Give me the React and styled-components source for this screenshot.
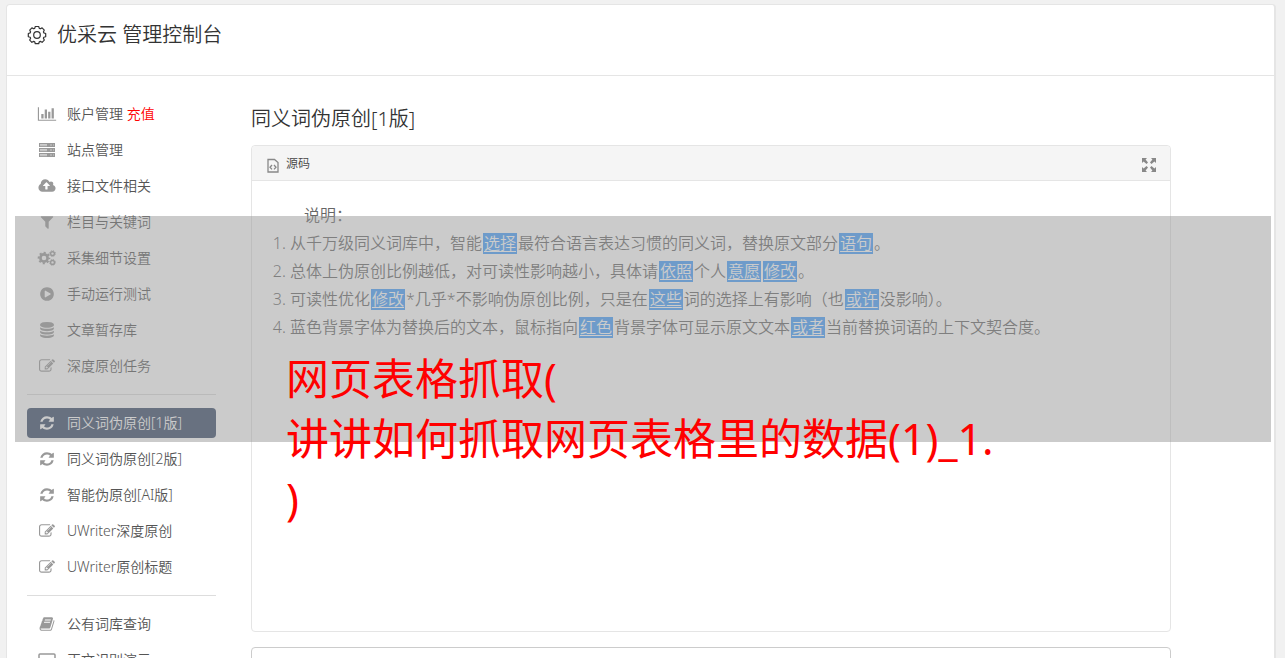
import React from "react";
import styled, { createGlobalStyle } from "styled-components"

const GlobalStyle = createGlobalStyle`
  * {
    box-sizing: border-box;
  }
  body {
    margin: 0;
    background: #f1f1f1;
    color: #444;
    font-family: "Noto Sans", "Noto Sans CJK SC", sans-serif;
    font-size: 14px;
    font-weight: 350;
  }
`

const Page = styled.div`
  position: relative;
  display: flex;
  height: 100vh;
  overflow: hidden;
  padding: 4px 9px 0 6px;
`

const Console = styled.div`
  flex: 1;
  background: white;
  border: 1px solid #e5e5e5;
  border-right-width: 2px;
  border-bottom: none;
  border-radius: 4px 4px 0 0;
`

const Header = styled.header`
  display: flex;
  align-items: center;
  gap: 10px;
  height: 71px;
  padding: 0 20px 10px;
  border-bottom: 1px solid #e5e5e5;
`

const Brand = styled.h1`
  margin: 0;
  color: #333;
  font-size: 20px;
  font-weight: 350;
  line-height: 30px;
`

const Columns = styled.div`
  display: flex;
  gap: 35px;
  padding: 23px 20px 0;
`

const Sidebar = styled.nav`
  flex: 0 0 189px;
`

const Menu = styled.ul`
  list-style: none;
  margin: 0;
  padding: 0;
  display: flex;
  flex-direction: column;
  gap: 6px;

  & + & {
    margin-top: 13px;
    padding-top: 13px;
    border-top: 1px solid #ddd;
  }
`

const MenuLink = styled.a`
  display: flex;
  align-items: center;
  gap: 10px;
  height: 30px;
  padding: 0 10px;
  border-radius: 4px;
  color: ${props => props.$active ? "white" : "#555"};
  background: ${props => props.$active ? "#394b69" : "transparent"};
  line-height: 28px;
  text-decoration: none;
  white-space: nowrap;

  svg {
    flex: none;
    width: 20px;
    color: ${props => props.$active ? "white" : "#999"};
  }
`

const Recharge = styled.span`
  color: red;
`

const Main = styled.main`
  flex: 1;
  max-width: 920px;
  display: flex;
  flex-direction: column;
`

const Title = styled.h2`
  margin: 5px 0 11px;
  color: #333;
  font-size: 20px;
  font-weight: 350;
  line-height: 30px;
`

const Editor = styled.section`
  min-height: 487px;
  margin-bottom: 15px;
  border: 1px solid #e5e5e5;
  border-radius: 4px;
`

const Toolbar = styled.div`
  display: flex;
  align-items: center;
  justify-content: space-between;
  height: 35px;
  padding: 0 14px;
  background: #f5f5f5;
  border-bottom: 1px solid #e5e5e5;
  border-radius: 4px 4px 0 0;
`

const ToolButton = styled.button`
  display: flex;
  align-items: center;
  gap: 6px;
  padding: 0;
  border: none;
  background: none;
  color: #444;
  font: inherit;
  font-size: 12px;

  svg {
    margin-top: 3px;
    color: #888;
  }
`

const Article = styled.div`
  padding: 20px;
  color: #666;
  font-size: 16px;
  line-height: 28px;

  p {
    margin: 0;
    text-indent: 2em;
  }

  ol {
    margin: 0;
    padding-left: 18px;
  }
`

const Word = styled.a`
  display: inline-block;
  margin: 0 1px;
  padding: 0 1px;
  color: white;
  background: #459ffd;
  line-height: 21px;
  text-underline-offset: 2px;
`

const Result = styled.textarea`
  height: 200px;
  resize: none;
  border: 1px solid #ccc;
  border-radius: 4px;
`

const Shade = styled.div`
  position: absolute;
  top: 216px;
  left: 15px;
  right: 14px;
  height: 226px;
  padding: 133px 0 0 271px;
  background: rgba(151, 151, 151, 0.5);
  pointer-events: none;
`

const Caption = styled.p`
  margin: 0;
  color: red;
  font-size: 43px;
  font-weight: 400;
  line-height: 60px;
  white-space: nowrap;
`

const Glyph = ({ d, width = 1792 }) => (
  <svg viewBox={`0 0 ${width} 1792`} height="16" fill="currentColor" aria-hidden="true">
    <path d={d} />
  </svg>
)

const BarChart = () => <Glyph width={2048} d="M640 896v512h-256v-512h256zm384-512v1024h-256v-1024h256zm1024 1152v128h-2048v-1536h128v1408h1920zm-640-896v768h-256v-768h256zm384-384v1152h-256v-1152h256z" />

const CloudUpload = () => <Glyph width={1920} d="M1280 864q0-14-9-23l-352-352q-9-9-23-9t-23 9l-351 351q-10 12-10 24 0 14 9 23t23 9h224v352q0 13 9.5 22.5t22.5 9.5h192q13 0 22.5-9.5t9.5-22.5v-352h224q13 0 22.5-9.5t9.5-22.5zm640 288q0 159-112.500 271.500t-271.500 112.500h-1088q-185 0-316.500-131.500t-131.500-316.500q0-130 70-240t188-165q-2-30-2-43 0-212 150-362t362-150q156 0 285.500 87t188.500 231q71-62 166-62 106 0 181 75t75 181q0 76-41 138 130 31 213.500 135.500t83.500 238.500z" />

const Filter = () => <Glyph d="M1595 295q17 41-14 70l-493 493v742q0 42-39 59-13 5-25 5-27 0-45-19l-256-256q-19-19-19-45v-486l-493-493q-31-29-14-70 17-39 59-39h1280q42 0 59 39z" />

const PlayCircle = () => <Glyph d="M896 128q209 0 385.500 103t279.500 279.500 103 385.500-103 385.500-279.500 279.500-385.500 103-385.500-103-279.500-279.500-103-385.500 103-385.500 279.500-279.500 385.500-103zm384 823q32-18 32-55t-32-55l-544-320q-31-19-64-1-32 19-32 56v640q0 37 32 56 16 8 32 8 17 0 32-9z" />

const Database = () => <Glyph d="M896 768q237 0 443-43t325-127v170q0 69-103 128t-280 93.500-385 34.500-385-34.500-280-93.500-103-128v-170q119 84 325 127t443 43zm0 768q237 0 443-43t325-127v170q0 69-103 128t-280 93.500-385 34.500-385-34.500-280-93.500-103-128v-170q119 84 325 127t443 43zm0-384q237 0 443-43t325-127v170q0 69-103 128t-280 93.500-385 34.500-385-34.500-280-93.500-103-128v-170q119 84 325 127t443 43zm0-1152q208 0 385 34.500t280 93.500 103 128v128q0 69-103 128t-280 93.500-385 34.500-385-34.500-280-93.500-103-128v-128q0-69 103-128t280-93.500 385-34.500z" />

const Edit = () => <Glyph d="M888 1184l116-116-152-152-116 116v56h96v96h56zm440-720q-16-16-33 1l-350 350q-17 17-1 33t33-1l350-350q17-17 1-33zm80 594v190q0 119-84.500 203.500t-203.500 84.500h-832q-119 0-203.500-84.500t-84.500-203.500v-832q0-119 84.500-203.500t203.500-84.500h832q63 0 117 25 15 7 18 23 3 17-9 29l-49 49q-14 14-32 8-23-6-45-6h-832q-66 0-113 47t-47 113v832q0 66 47 113t113 47h832q66 0 113-47t47-113v-126q0-13 9-22l64-64q15-15 35-7t20 29zm-96-738l288 288-672 672h-288v-288zm444 132l-92 92-288-288 92-92q28-28 68-28t68 28l152 152q28 28 28 68t-28 68z" />

const Refresh = () => <Glyph d="M1639 1056q0 5-1 7-64 268-268 434.500t-478 166.500q-146 0-282.500-55t-243.500-157l-129 129q-19 19-45 19t-45-19-19-45v-448q0-26 19-45t45-19h448q26 0 45 19t19 45-19 45l-137 137q71 66 161 102t187 36q134 0 250-65t186-179q11-17 53-117 8-23 30-23h192q13 0 22.500 9.500t9.500 22.500zm25-800v448q0 26-19 45t-45 19h-448q-26 0-45-19t-19-45 19-45l138-138q-148-137-349-137-134 0-250 65t-186 179q-11 17-53 117-8 23-30 23h-199q-13 0-22.500-9.500t-9.500-22.500v-7q65-268 270-434.500t480-166.500q146 0 284 55.500t245 156.500l130-129q19-19 45-19t45 19 19 45z" />

const Book = () => <Glyph d="M1703 478q40 57 18 129l-275 906q-19 64-76.500 107.500t-122.500 43.500h-923q-77 0-148.500-53.500t-99.500-131.500q-24-67-2-127 0-4 3-27t4-37q1-8-3-21.500t-3-19.500q2-11 8-21t16.500-23.500 16.500-23.500q23-38 45-91.500t30-91.500q3-10 .5-30t-.5-28q3-11 17-28t17-23q21-36 42-92t25-90q1-9-2.500-32t.5-28q4-13 22-30.500t22-22.500q19-26 42.500-84.500t27.500-96.500q1-8-3-25.500t-2-26.500q2-8 9-18t18-23 17-21q8-12 16.500-30.500t15-35 16-36 19.500-32 26.500-23.500 36-11.500 47.500 5.500l-1 3q38-9 51-9h761q74 0 114 56t18 130l-274 906q-36 119-71.500 153.500t-128.500 34.500h-869q-27 0-38 15-11 16-1 43 24 70 144 70h923q29 0 56-15.500t35-41.500l300-987q7-22 5-57 38 15 59 43zm-1064 2q-4 13 2 22.500t20 9.500h608q13 0 25.500-9.500t16.500-22.500l21-64q4-13-2-22.500t-20-9.500h-608q-13 0-25.500 9.500t-16.500 22.500zm-83 256q-4 13 2 22.500t20 9.500h608q13 0 25.500-9.500t16.500-22.500l21-64q4-13-2-22.500t-20-9.500h-608q-13 0-25.500 9.500t-16.500 22.500z" />

const Server = () => (
  <svg viewBox="0 0 20 16" height="16" aria-hidden="true">
    {[1, 6, 11].map(y => (
      <g key={y}>
        <rect x="2" y={y} width="16" height="4" fill="currentColor" />
        <path d={`M3 ${y + 1.5}h7M3 ${y + 2.7}h7M13 ${y + 2}h2M16 ${y + 2}h1`} stroke="white" strokeWidth="0.5" />
      </g>
    ))}
  </svg>
)

// one big cog on the left, two small ones stacked on the right
const Cogs = () => (
  <svg viewBox="0 0 20 16" height="16" fill="none" stroke="currentColor" aria-hidden="true">
    <circle cx="7" cy="8" r="3.6" strokeWidth="2.6" />
    <circle cx="7" cy="8" r="5.4" strokeWidth="1.8" strokeDasharray="2.12 2.12" strokeDashoffset="1.06" />
    <circle cx="15.500" cy="3.600" r="1.900" strokeWidth="1.400" />
    <circle cx="15.500" cy="3.600" r="2.900" strokeWidth="1" strokeDasharray="1.14 1.14" />
    <circle cx="15.500" cy="12.400" r="1.900" strokeWidth="1.400" />
    <circle cx="15.500" cy="12.400" r="2.900" strokeWidth="1" strokeDasharray="1.14 1.14" />
  </svg>
)

const Laptop = () => (
  <svg viewBox="0 0 20 16" height="16" fill="none" stroke="currentColor" aria-hidden="true">
    <rect x="2" y="2" width="16" height="11" rx="1" strokeWidth="1.5" />
    <path d="M0 15h20" strokeWidth="2" />
  </svg>
)

const Gear = () => (
  <svg viewBox="0 0 20 20" width="20" height="20" fill="none" stroke="#333" strokeWidth="1.2" strokeLinejoin="round" aria-hidden="true">
    <path d="M8.300 1.500h3.400l.6 1.900 1 .4 1.800-.9 2.200 2.200-.9 1.800.4 1 1.900.6v3.200l-1.900.6-.4 1 .9 1.800-2.200 2.200-1.800-.9-1 .4-.6 1.900h-3.400l-.6-1.900-1-.4-1.800.9-2.200-2.200.9-1.800-.4-1-1.900-.6V8.500l1.900-.6.4-1-.9-1.800 2.200-2.200 1.800.9 1-.4z" />
    <circle cx="10" cy="10" r="3.300" />
  </svg>
)

const CodeFile = () => (
  <svg viewBox="0 0 14 16" width="14" height="16" fill="none" stroke="currentColor" aria-hidden="true">
    <path d="M2 2.500h6.500l3.500 3v9.500h-10z" strokeWidth="1.300" />
    <path d="M6 8l-2 2.200 2 2.200M8 8l2 2.200-2 2.200" strokeWidth="1.300" />
  </svg>
)

const Expand = () => (
  <svg viewBox="0 0 14 14" width="14" height="14" fill="currentColor" aria-hidden="true">
    <path d="M0 0h5L3.600 1.600 6 4.500 4.500 6 1.600 3.600 0 5zM14 0v5l-1.600-1.400L9.500 6 8 4.500l2.400-2.900L9 0zM0 14V9l1.600 1.400L4.500 8 6 9.500l-2.400 2.900L5 14zM14 14H9l1.400-1.600L8 9.500 9.500 8l2.900 2.400L14 9z" />
  </svg>
)

const menus = [
  [
    { icon: BarChart, text: "账户管理", extra: "充值" },
    { icon: Server, text: "站点管理" },
    { icon: CloudUpload, text: "接口文件相关" },
    { icon: Filter, text: "栏目与关键词" },
    { icon: Cogs, text: "采集细节设置" },
    { icon: PlayCircle, text: "手动运行测试" },
    { icon: Database, text: "文章暂存库" },
    { icon: Edit, text: "深度原创任务" }
  ],
  [
    { icon: Refresh, text: "同义词伪原创[1版]", active: true },
    { icon: Refresh, text: "同义词伪原创[2版]" },
    { icon: Refresh, text: "智能伪原创[AI版]" },
    { icon: Edit, text: "UWriter深度原创" },
    { icon: Edit, text: "UWriter原创标题" }
  ],
  [
    { icon: Book, text: "公有词库查询" },
    { icon: Laptop, text: "正文识别演示" }
  ]
]

export default function App() {
  return (
    <Page>
      <GlobalStyle />
      <Console>
        <Header>
          <Gear />
          <Brand>优采云 管理控制台</Brand>
        </Header>
        <Columns>
          <Sidebar>
            {menus.map((items, i) => (
              <Menu key={i}>
                {items.map(({ icon: Icon, text, extra, active }) => (
                  <li key={text}>
                    <MenuLink href="#" $active={active}>
                      <Icon />
                      <span>{text} {extra && <Recharge>{extra}</Recharge>}</span>
                    </MenuLink>
                  </li>
                ))}
              </Menu>
            ))}
          </Sidebar>
          <Main>
            <Title>同义词伪原创[1版]</Title>
            <Editor>
              <Toolbar>
                <ToolButton type="button"><CodeFile />源码</ToolButton>
                <ToolButton type="button" aria-label="全屏"><Expand /></ToolButton>
              </Toolbar>
              <Article>
                <p>说明：</p>
                <ol>
                  <li>从千万级同义词库中，智能<Word href="#">选择</Word>最符合语言表达习惯的同义词，替换原文部分<Word href="#">语句</Word>。</li>
                  <li>总体上伪原创比例越低，对可读性影响越小，具体请<Word href="#">依照</Word>个人<Word href="#">意愿</Word><Word href="#">修改</Word>。</li>
                  <li>可读性优化<Word href="#">修改</Word>*几乎*不影响伪原创比例，只是在<Word href="#">这些</Word>词的选择上有影响（也<Word href="#">或许</Word>没影响）。</li>
                  <li>蓝色背景字体为替换后的文本，鼠标指向<Word href="#">红色</Word>背景字体可显示原文文本<Word href="#">或者</Word>当前替换词语的上下文契合度。</li>
                </ol>
              </Article>
            </Editor>
            <Result aria-label="结果" />
          </Main>
        </Columns>
      </Console>
      <Shade>
        <Caption>
          网页表格抓取(<br />
          讲讲如何抓取网页表格里的数据(1)_1.<br />
          )
        </Caption>
      </Shade>
    </Page>
  );
}
